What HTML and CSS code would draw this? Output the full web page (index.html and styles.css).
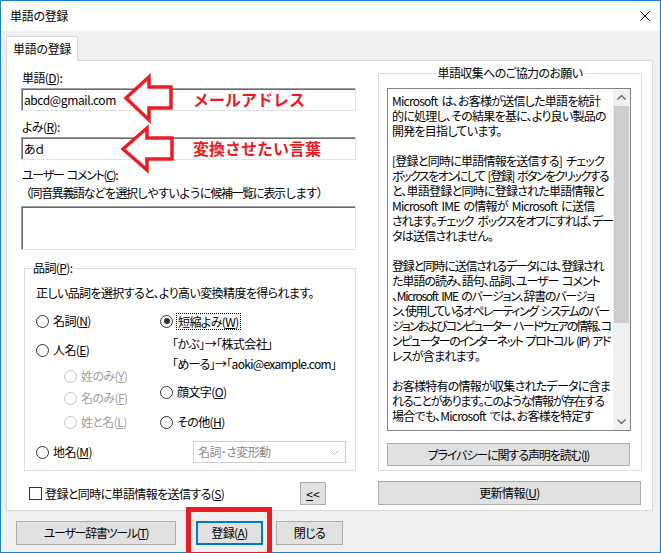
FILE: index.html
```html
<!DOCTYPE html>
<html lang="ja">
<head>
<meta charset="utf-8">
<title>単語の登録</title>
<link rel="stylesheet" href="styles.css">
</head>
<body>
<div class="window">
  <div class="titlebar">
    <span class="title">単語の登録</span>
    <svg class="close" width="10" height="10" viewBox="0 0 10 10"><path d="M0.5 0.5L9.5 9.5M9.5 0.5L0.5 9.5" stroke="#000" stroke-width="1"/></svg>
  </div>
  <div class="tabs"><div class="tab">単語の登録</div></div>
  <div class="panel">
    <div class="left">
      <div class="lbl lbl-first">単語(<u>D</u>):</div>
      <div class="input">abcd@gmail.com</div>
      <div class="lbl">よみ(<u>R</u>):</div>
      <div class="input">あｄ</div>
      <div class="lbl lbl-comment kana">ユーザー コメント(<u>C</u>):</div>
      <div class="note">（同音異義語などを選択しやすいように候補一覧に表示します）</div>
      <div class="textarea"></div>
      <div class="group">
        <span class="legend">品詞(<u>P</u>):</span>
        <div class="desc">正しい品詞を選択すると、より高い変換精度を得られます。</div>
        <div class="cols">
          <div class="col-a">
            <div class="radio"><span class="dot"></span>名詞(<u>N</u>)</div>
            <div class="radio"><span class="dot"></span>人名(<u>E</u>)</div>
            <div class="radio sub disabled"><span class="dot"></span>姓のみ(<u>Y</u>)</div>
            <div class="radio sub disabled"><span class="dot"></span>名のみ(<u>F</u>)</div>
            <div class="radio sub disabled"><span class="dot"></span>姓と名(<u>L</u>)</div>
          </div>
          <div class="col-b">
            <div class="radio"><span class="dot on"></span><span class="focus">短縮よみ(<u>W</u>)</span></div>
            <div class="ex">「かぶ」→「株式会社」</div>
            <div class="ex">「めーる」→「aoki@example.com」</div>
            <div class="radio"><span class="dot"></span>顔文字(<u>O</u>)</div>
            <div class="radio"><span class="dot"></span>その他(<u>H</u>)</div>
          </div>
        </div>
        <div class="last-row">
          <div class="radio place"><span class="dot"></span>地名(<u>M</u>)</div>
          <div class="select">名詞･さ変形動<svg class="chev" width="9" height="5" viewBox="0 0 9 5"><path d="M0.5 0.5L4.5 4.5L8.5 0.5" fill="none" stroke="#b8b8b8" stroke-width="1"/></svg></div>
        </div>
      </div>
      <div class="check-row">
        <span class="box"></span>
        <span class="check-text">登録と同時に単語情報を送信する(<u>S</u>)</span>
        <button class="btn small"><u>&lt;</u>&lt;</button>
      </div>
    </div>
    <div class="right">
      <div class="group2">
        <span class="legend2">単語収集へのご協力のお願い</span>
        <div class="textbox">
          <div class="text">Microsoft は、お客様が送信した単語を統計<br>的に処理し、その結果を基に、より良い製品の<br>開発を目指しています。<br><br>[登録と同時に単語情報を送信する] チェック<br><span class="t3">ボックスをオンにして [登録] ボタンをクリックする</span><br>と、単語登録と同時に登録された単語情報と<br>Microsoft IME の情報が Microsoft に送信<br><span class="t1">されます。チェック ボックスをオフにすれば、デー</span><br>タは送信されません。<br><br><span class="t2">登録と同時に送信されるデータには、登録され</span><br><span class="t1">た単語の読み、語句、品詞、ユーザー コメント</span><br><span class="t2">、Microsoft IME のバージョン、辞書のバージョ</span><br><span class="t3">ン、使用しているオペレーティング システムのバー</span><br><span class="t5">ジョンおよびコンピューター ハードウェアの情報、コ</span><br><span class="t3">ンピューターのインターネット プロトコル (IP) アド</span><br>レスが含まれます。<br><br>お客様特有の情報が収集されたデータに含ま<br><span class="t2">れることがあります。このような情報が存在する</span><br>場合でも、Microsoft では、お客様を特定す</div>
          <div class="scrollbar">
            <div class="sb-btn"><svg width="9" height="5" viewBox="0 0 9 5"><path d="M0.5 4.5L4.5 0.5L8.5 4.5" fill="none" stroke="#606060" stroke-width="1.2"/></svg></div>
            <div class="thumb"></div>
            <div class="sb-track"></div>
            <div class="sb-btn"><svg width="9" height="5" viewBox="0 0 9 5"><path d="M0.5 0.5L4.5 4.5L8.5 0.5" fill="none" stroke="#606060" stroke-width="1.2"/></svg></div>
          </div>
        </div>
        <button class="btn privacy">プライバシーに関する声明を読む(<u>I</u>)</button>
      </div>
      <button class="btn update">更新情報(<u>U</u>)</button>
    </div>
  </div>
  <div class="bottom">
    <button class="btn b-tool">ユーザー辞書ツール(<u>T</u>)</button>
    <button class="btn b-reg">登録(<u>A</u>)</button>
    <button class="btn b-close">閉じる</button>
  </div>
</div>

<svg class="marks" width="661" height="553" viewBox="0 0 661 553">
  <polygon points="126,98 149,77 149,87 171,87 171,108 149,108 149,120" fill="#fff" stroke="#ec1c24" stroke-width="3.5" stroke-linejoin="miter"/>
  <polygon points="123,149 147,128 147,138 172,138 172,159 147,159 147,170" fill="#fff" stroke="#ec1c24" stroke-width="3.5" stroke-linejoin="miter"/>
</svg>
<div class="anno anno1">メールアドレス</div>
<div class="anno anno2">変換させたい言葉</div>
<div class="redbox"></div>
</body>
</html>
```

FILE: styles.css
```css
* { box-sizing: border-box; }
html, body { margin: 0; padding: 0; }
body {
  position: relative;
  width: 661px;
  height: 553px;
  overflow: hidden;
  background: #fff;
  font-family: "Noto Sans CJK JP", "Noto Sans", sans-serif;
  font-size: 12px;
  color: #000;
  font-feature-settings: "palt";
  letter-spacing: -0.6px;
}
u { text-decoration: underline; text-underline-offset: 1px; }

.window {
  width: 661px;
  height: 553px;
  border: 1px solid #1883d7;
  background: #f0f0f0;
}
.titlebar {
  height: 30px;
  background: #fff;
  display: flex;
  align-items: center;
  justify-content: space-between;
  padding: 0 10px 0 9px;
  line-height: 16px;
  letter-spacing: -0.3px;
}
.tabs {
  margin-top: 5px;
  padding-left: 5px;
  display: flex;
}
.tab {
  position: relative;
  z-index: 1;
  width: 72px;
  height: 25px;
  margin-bottom: -1px;
  border: 1px solid #d9d9d9;
  border-bottom: none;
  background: #fff;
  line-height: 23px;
  padding-left: 6px;
  letter-spacing: -0.3px;
}
.panel {
  margin-left: 5px;
  width: 647px;
  height: 451px;
  border: 1px solid #d9d9d9;
  background: #fff;
  display: flex;
  padding-left: 14px;
}
.left {
  width: 335px;
  display: flex;
  flex-direction: column;
}
.lbl {
  height: 16px;
  line-height: 16px;
  margin-top: 8px;
  padding-left: 1px;
}
.lbl-first { margin-top: 9px; }
.lbl-comment { margin-top: 7px; }
.kana { letter-spacing: -1.3px; word-spacing: 2px; }
.input {
  margin-top: 2px;
  height: 23px;
  border: 1px solid;
  border-color: #a0a0a0 #e3e3e3 #e3e3e3 #a0a0a0;
  box-shadow: inset 1px 1px 0 #696969;
  padding-left: 2px;
  line-height: 21px;
  letter-spacing: -0.4px;
}
.note {
  margin-top: 2px;
  height: 16px;
  line-height: 16px;
  font-feature-settings: normal;
  letter-spacing: -1.4px;
  margin-left: -1px;
}
.textarea {
  margin-top: 5px;
  height: 44px;
  border: 1px solid;
  border-color: #a0a0a0 #e3e3e3 #e3e3e3 #a0a0a0;
  box-shadow: inset 1px 1px 0 #696969;
}
.group {
  position: relative;
  margin-top: 18px;
  margin-left: 3px;
  width: 332px;
  height: 203px;
  border: 1px solid #dcdcdc;
  padding: 16px 0 0 11px;
}
.legend {
  position: absolute;
  top: -9px;
  left: 7px;
  padding: 0 1px;
  background: #fff;
  line-height: 16px;
}
.desc {
  height: 16px;
  line-height: 16px;
  white-space: nowrap;
}
.cols {
  margin-top: 12px;
  display: flex;
}
.col-a { width: 124px; display: flex; flex-direction: column; }
.col-b { display: flex; flex-direction: column; }
.radio {
  height: 16px;
  line-height: 16px;
  display: flex;
  align-items: center;
  white-space: nowrap;
}
.dot {
  width: 13px;
  height: 13px;
  border: 1px solid #333;
  border-radius: 50%;
  background: #fff;
  margin-right: 4px;
  display: flex;
  align-items: center;
  justify-content: center;
  flex: none;
}
.dot.on::after {
  content: "";
  width: 6px;
  height: 6px;
  border-radius: 50%;
  background: #333;
}
.disabled { color: #a0a0a0; }
.disabled .dot { border-color: #c4c4c4; }
.sub { margin-left: 28px; }
.col-a .radio:nth-child(2) { margin-top: 13px; }
.col-a .radio:nth-child(3) { margin-top: 10px; }
.col-a .radio:nth-child(4) { margin-top: 6px; }
.col-a .radio:nth-child(5) { margin-top: 8px; }
.focus {
  outline: 1px dotted #000;
  outline-offset: 0;
  padding: 0 1px;
  line-height: 15px;
}
.ex {
  height: 16px;
  line-height: 16px;
  margin-left: 12px;
  white-space: nowrap;
}
.col-b .ex:nth-child(2) { margin-top: 7px; }
.col-b .ex:nth-child(3) { margin-top: 4px; letter-spacing: -0.7px; }
.col-b .radio:nth-child(4) { margin-top: 12px; }
.col-b .radio:nth-child(5) { margin-top: 14px; }
.last-row {
  margin-top: 11px;
  display: flex;
  align-items: center;
  height: 22px;
}
.place { width: 157px; }
.select {
  width: 153px;
  height: 22px;
  border: 1px solid #cccccc;
  background: #fff;
  color: #8a8a8a;
  line-height: 20px;
  padding-left: 4px;
  display: flex;
  align-items: center;
  justify-content: space-between;
  padding-right: 6px;
}
.check-row {
  margin-top: 11px;
  height: 23px;
  display: flex;
  align-items: center;
}
.box {
  width: 13px;
  height: 13px;
  border: 1px solid #333;
  background: #fff;
  margin-left: 8px;
}
.check-text { margin-left: 3px; }
.btn {
  font: inherit;
  color: #000;
  background: #e1e1e1;
  border: 1px solid #adadad;
  padding: 0;
  margin: 0;
  text-align: center;
  line-height: 20px;
  font-feature-settings: "palt";
  letter-spacing: -0.6px;
}
.small {
  width: 26px;
  height: 23px;
  margin-left: auto;
  margin-right: 30px;
  font-feature-settings: normal;
  letter-spacing: 0;
}

.right {
  margin-left: 22px;
  width: 264px;
  display: flex;
  flex-direction: column;
}
.group2 {
  position: relative;
  margin-top: 12px;
  height: 398px;
  border: 1px solid #dcdcdc;
  padding: 14px 0 0 8px;
}
.legend2 {
  position: absolute;
  top: -9px;
  left: 0;
  right: 0;
  margin: 0 auto;
  width: max-content;
  padding: 0 2px;
  background: #fff;
  line-height: 16px;
}
.textbox {
  width: 244px;
  height: 343px;
  border: 1px solid #828282;
  display: flex;
}
.text {
  flex: 1;
  overflow: hidden;
  padding: 4px 0 0 4px;
  line-height: 15px;
  white-space: nowrap;
  letter-spacing: -0.75px;
  word-spacing: 2px;
}
.t1 { letter-spacing: -1px; }
.t2 { letter-spacing: -1.25px; }
.t3 { letter-spacing: -1.5px; }
.t5 { letter-spacing: -1.85px; }
.scrollbar {
  width: 17px;
  flex: none;
  background: #f0f0f0;
  display: flex;
  flex-direction: column;
  align-items: center;
}
.sb-btn {
  height: 17px;
  width: 17px;
  display: flex;
  align-items: center;
  justify-content: center;
  flex: none;
}
.thumb {
  width: 15px;
  height: 217px;
  background: #cdcdcd;
  flex: none;
}
.sb-track { flex: 1; }
.privacy {
  margin-top: 12px;
  width: 243px;
  height: 23px;
  letter-spacing: -1.1px;
}
.update {
  margin-top: 10px;
  width: 263px;
  height: 24px;
}

.bottom {
  margin-top: 10px;
  display: flex;
  padding-left: 15px;
}
.bottom .btn { height: 24px; }
.b-tool { width: 160px; letter-spacing: -1.3px; }
.b-reg {
  width: 67px;
  margin-left: 20px;
  border: 2px solid #0078d7;
}
.b-close { width: 67px; margin-left: 13px; }

.marks {
  position: absolute;
  left: 0;
  top: 0;
  pointer-events: none;
}
.anno {
  position: absolute;
  left: 193px;
  color: #ec1c24;
  font-weight: bold;
  font-size: 16px;
  line-height: 18px;
  font-feature-settings: normal;
  letter-spacing: 0;
  white-space: nowrap;
}
.anno1 { top: 90px; }
.anno2 { top: 139px; }
.redbox {
  position: absolute;
  left: 186px;
  top: 507px;
  width: 86px;
  height: 50px;
  border: 5px solid #ec1c24;
}
```
